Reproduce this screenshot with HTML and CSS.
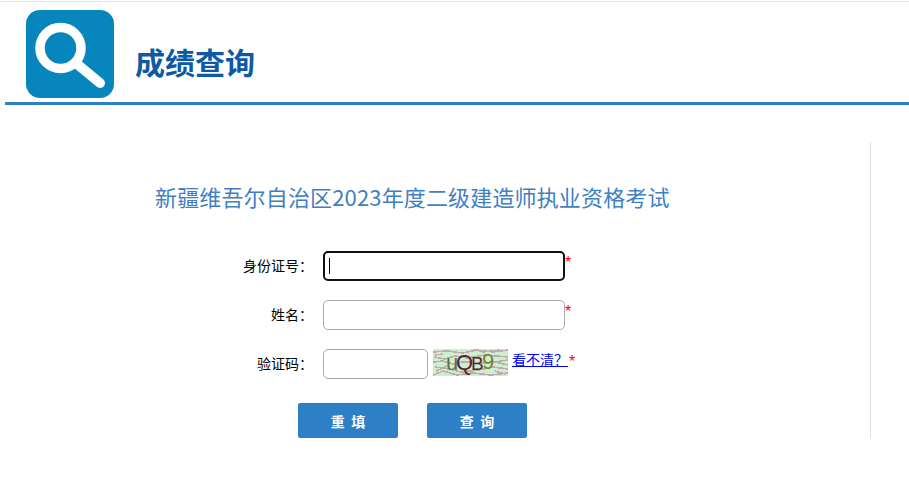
FILE: index.html
```html
<!DOCTYPE html>
<html lang="zh-CN">
<head>
  <meta charset="UTF-8" />
  <meta name="viewport" content="width=device-width, initial-scale=1" />
  <title>成绩查询</title>
  <link rel="stylesheet" href="styles.css">
</head>
<body>

  <div class="header">
    <svg class="logo" width="88" height="88" viewBox="0 0 88 88">
      <rect width="88" height="88" rx="14" fill="#0785bd" />
      <circle cx="34.5" cy="38" r="20.5" fill="none" stroke="#fff" stroke-width="9.5" />
      <path d="M51 54 L74 73" fill="none" stroke="#fff" stroke-width="10" stroke-linecap="round" />
    </svg>
    <h1>成绩查询</h1>
  </div>

  <div class="panel">
    <h2>新疆维吾尔自治区2023年度二级建造师执业资格考试</h2>

    <form class="query-form">
      <div class="row">
        <label for="idcard">身份证号：</label>
        <div class="input-wrap caret">
          <input class="text-input" id="idcard" type="text" autofocus>
        </div>
        <span class="req">*</span>
      </div>
      <div class="row">
        <label for="name">姓名：</label>
        <input class="text-input" id="name" type="text">
        <span class="req">*</span>
      </div>
      <div class="row">
        <label for="code">验证码：</label>
        <input class="text-input code-input" id="code" type="text">
        <svg class="captcha" width="75" height="27" viewBox="0 0 75 27" shape-rendering="crispEdges">
          <rect width="75" height="27" fill="#cdeed2" />
          <g fill="none" stroke="#bcaea6" stroke-width="1.6">
            <path d="M0 3 L14 2 L30 4 L44 1 L60 3 L75 1" />
            <path d="M1 8 L12 10 L22 7 L34 9 L52 6 L75 8" />
            <path d="M0 13 L10 12 L20 15 L30 13 L55 14 L75 11" />
            <path d="M2 18 L16 20 L28 23 L46 21 L60 18 L75 20" />
            <path d="M0 26 L10 22 L24 26 L40 24 L58 26 L75 24" />
            <path d="M40 0 L50 3 L66 1 M58 12 L75 16 M3 22 L14 17 M62 22 L72 25 M2 6 L10 5" />
          </g>
          <text class="captcha-text" y="21">
            <tspan x="13" fill="#5c7048">u</tspan><tspan x="23" fill="#55222f">Q</tspan><tspan class="captcha-b" x="38" fill="#4f2a30">B</tspan><tspan x="49" y="20" fill="#7a8030">9</tspan>
          </text>
        </svg>
        <a class="refresh" href="#">看不清？</a>
        <span class="req req-code">*</span>
      </div>
      <div class="buttons">
        <button class="btn" type="reset">重&nbsp;&nbsp;填</button>
        <button class="btn" type="button">查&nbsp;&nbsp;询</button>
      </div>
    </form>
  </div>

</body>
</html>
```

FILE: styles.css
```css
html {
  padding-top: 1px;
}

body {
  margin: 0;
  background: #fff;
  color: #000;
  font-family: "Liberation Sans", "Noto Sans CJK SC", sans-serif;
  font-size: 14px;
  border-top: 1px solid #e7e7e7;
}

/* Header */
.header {
  display: flex;
  align-items: flex-start;
  margin-left: 5px;
  padding: 8px 0 4px 21px;
  border-bottom: 3px solid #2e80c6;
}

.logo {
  display: block;
}

h1 {
  margin: 32px 0 0 21px;
  font-family: "Noto Sans CJK SC", sans-serif;
  font-size: 30px;
  line-height: 38px;
  font-weight: bold;
  color: #0c5aa6;
}

/* Panel with the form */
.panel {
  width: 870px;
  height: 296px;
  margin-top: 37px;
  border-right: 1px solid #ddd;
}

h2 {
  margin: 0;
  padding: 24px 0 0 155px;
  font-family: "Noto Sans CJK SC", sans-serif;
  font-size: 22px;
  line-height: 60px;
  font-weight: normal;
  letter-spacing: 0.15px;
  color: #3f7fc4;
}

.query-form {
  margin-top: 25px;
}

.row {
  display: flex;
  align-items: flex-start;
  height: 30px;
  margin-bottom: 19px;
}

.row label {
  display: block;
  width: 313px;
  height: 30px;
  margin-right: 10px;
  line-height: 30px;
  text-align: right;
}

.input-wrap {
  position: relative;
}

/* caret of the focused field */
.caret::after {
  content: "";
  position: absolute;
  left: 6px;
  top: 7px;
  width: 1px;
  height: 16px;
  background: #000;
}

.text-input {
  display: block;
  box-sizing: border-box;
  width: 242px;
  height: 30px;
  padding: 0 5px;
  border: 1px solid #a9a9a9;
  border-radius: 5px;
  background: #fff;
  outline: none;
  font-size: 14px;
  caret-color: transparent;
}

.text-input:focus {
  border: 2px solid #101010;
  padding: 0 4px;
}

.code-input {
  width: 105px;
}

.req {
  color: #f00;
  font-size: 16px;
  line-height: 24px;
}

.captcha {
  display: block;
  margin-left: 5px;
}

.captcha-text {
  font-family: "Liberation Sans", sans-serif;
  font-size: 22px;
}

.captcha-b {
  font-size: 19px;
}

.refresh {
  margin-left: 4px;
  color: #00f;
  line-height: 22px;
}

.req-code {
  margin-left: 1px;
  line-height: 25px;
}

.buttons {
  display: flex;
  gap: 29px;
  margin: 24px 0 0 298px;
}

.btn {
  width: 100px;
  height: 35px;
  padding: 0;
  border: none;
  border-radius: 2px;
  background: #2e80c6;
  color: #fff;
  font-family: "Noto Sans CJK SC", sans-serif;
  font-size: 14px;
  font-weight: bold;
  cursor: pointer;
}
```
